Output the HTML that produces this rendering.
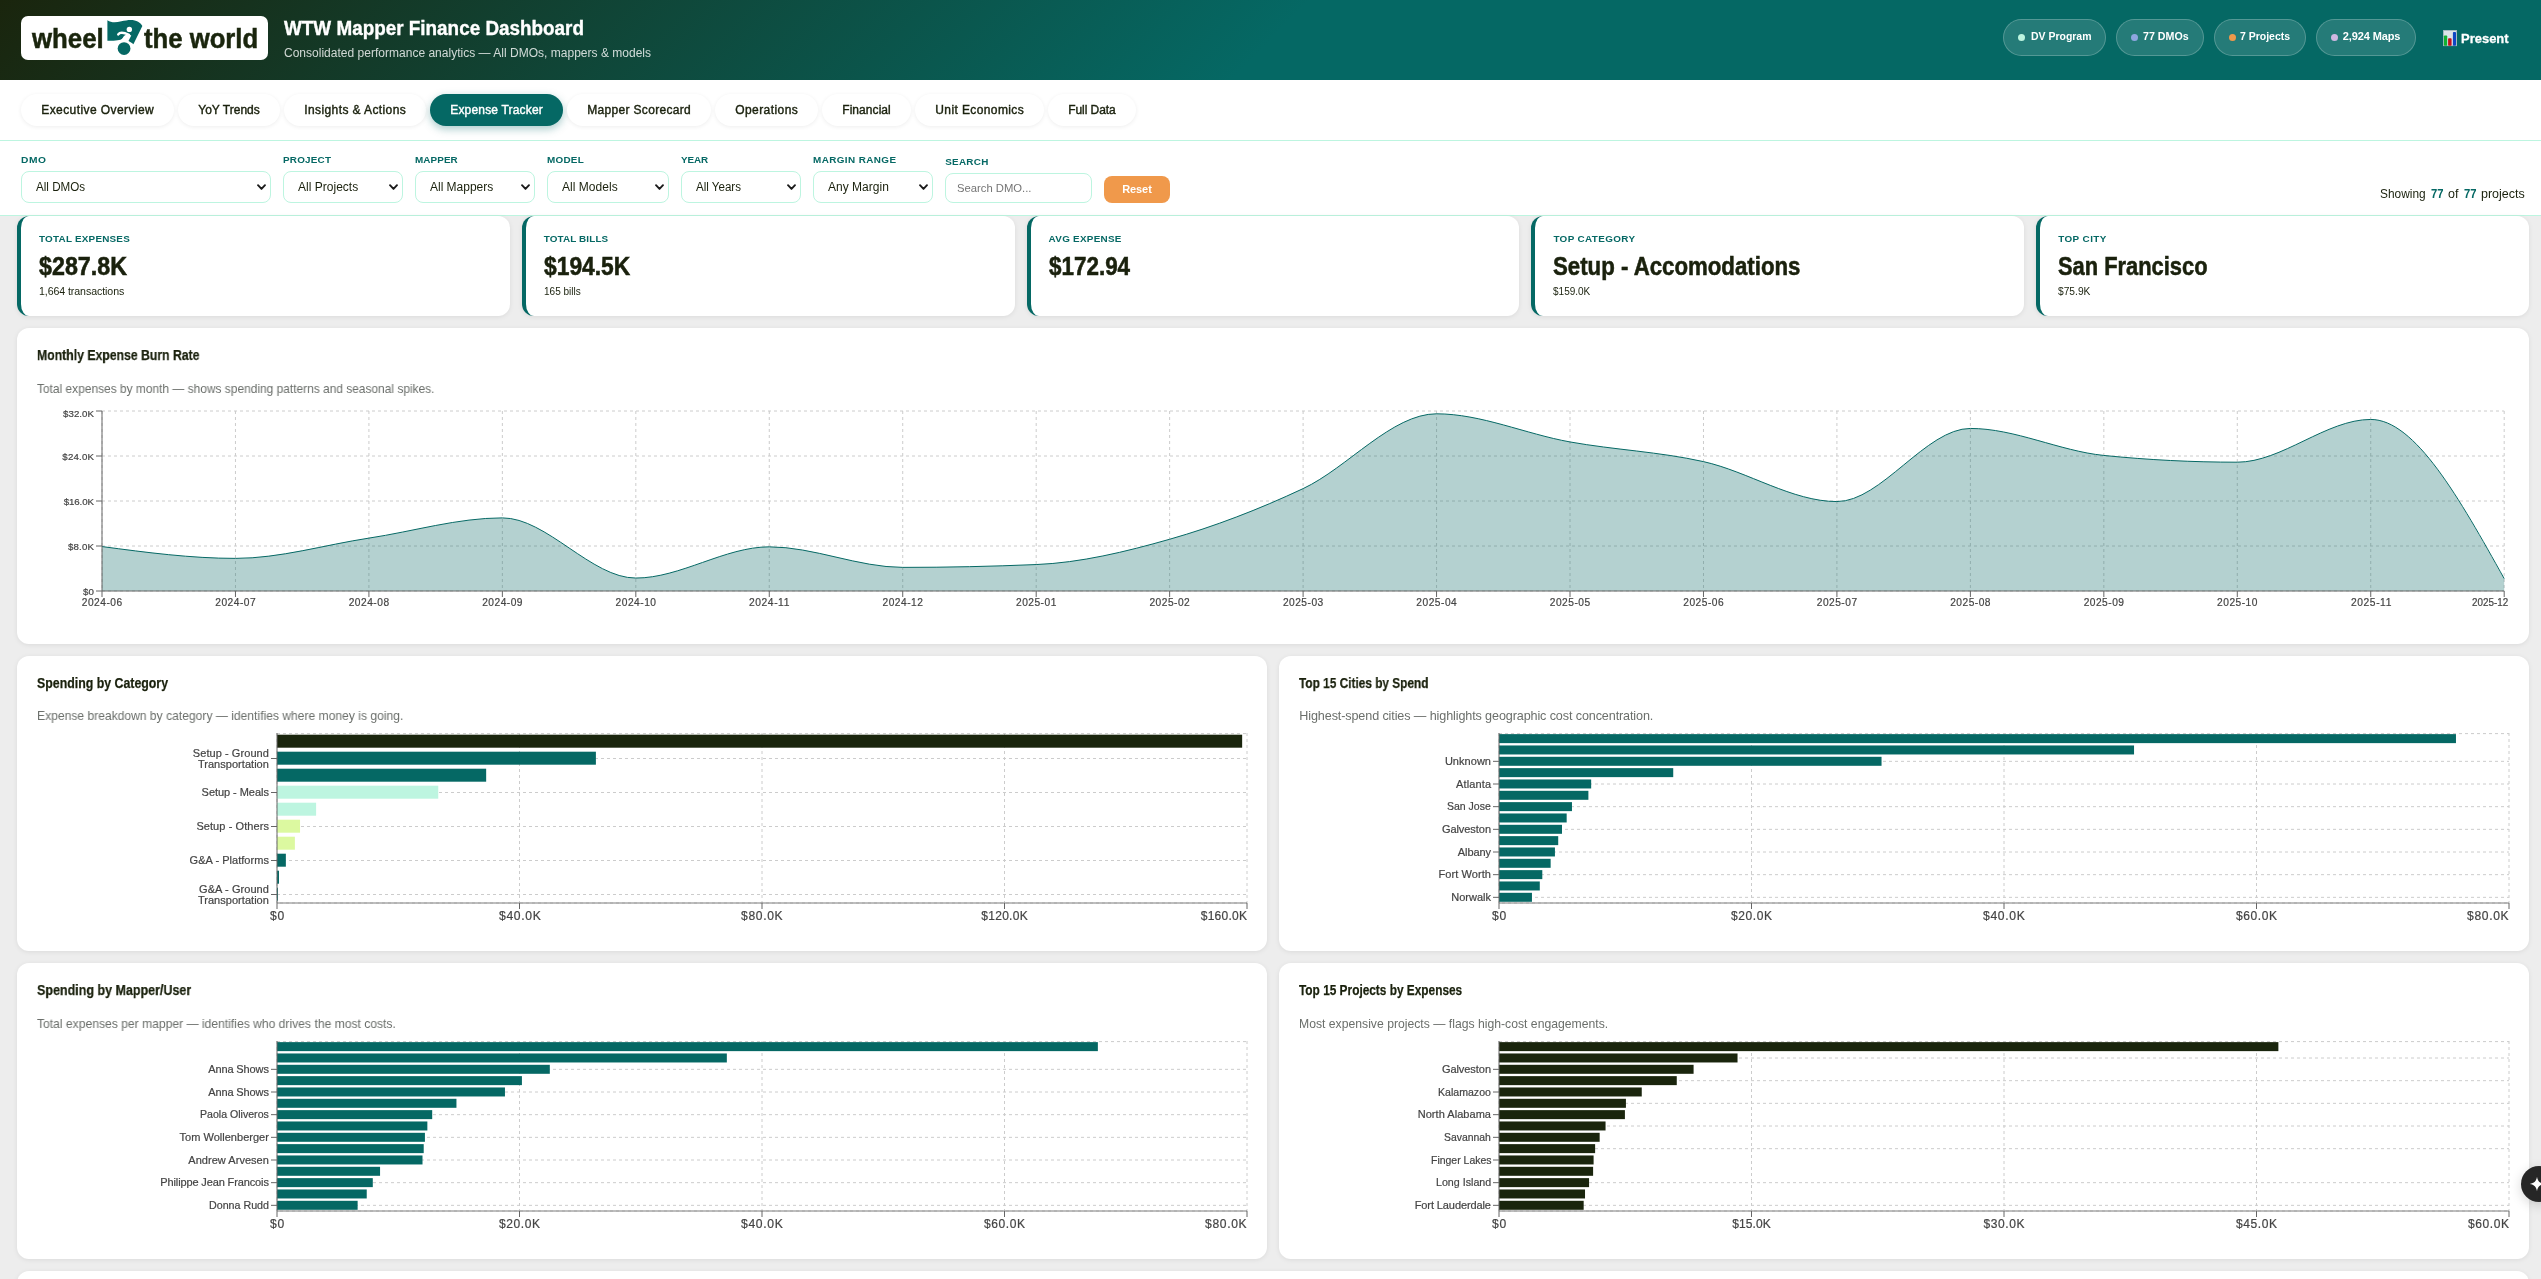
<!DOCTYPE html>
<html lang="en"><head><meta charset="utf-8"><title>WTW Mapper Finance Dashboard</title>
<style>
html,body{margin:0;padding:0;}
body{width:2541px;height:1279px;overflow:hidden;background:#ededed;position:relative;font-family:"Liberation Sans",sans-serif;}
.t{position:absolute;white-space:nowrap;line-height:1;transform-origin:0 50%;}
.b{position:absolute;box-sizing:border-box;}
svg{position:absolute;overflow:visible;}
svg text{font-family:"Liberation Sans",sans-serif;}
#w{position:absolute;left:0;top:0;width:2541px;height:1279px;will-change:transform;}
</style></head><body><div id="w">
<div class="b" style="left:0px;top:0px;width:2541px;height:80px;background:linear-gradient(135deg,#1a250d 0%,#056864 50%,#056864 100%);"></div>
<div class="b" style="left:21px;top:16px;width:247px;height:44px;background:#fff;border-radius:7px;"></div>
<div class="t" style="left:31.50px;top:25.50px;font-size:27px;font-weight:700;color:#1a250d;transform:scaleX(0.9556);-webkit-text-stroke:0.5px #1a250d;">wheel</div>
<div class="t" style="left:143.80px;top:25.50px;font-size:27px;font-weight:700;color:#1a250d;transform:scaleX(0.9517);-webkit-text-stroke:0.5px #1a250d;">the world</div>
<svg style="left:95px;top:12px" width="60" height="52" viewBox="0 0 1476 1279">
<path d="M305,200 C400,262 500,262 650,228 C800,192 950,170 1060,240 C1110,272 1150,310 1165,345 L945,795 C900,750 840,715 760,680 L690,640 C640,690 560,712 305,705 Z" fill="#056864"/>
<circle cx="715" cy="900" r="205" fill="#fff"/>
<path d="M572,552 C612,488 705,498 835,560" fill="none" stroke="#fff" stroke-width="60" stroke-linecap="round"/>
<path d="M800,535 L892,578 L820,722 L610,722 C650,690 685,645 702,598 Z" fill="#fff"/>
<path d="M612,590 C640,560 672,566 700,600" fill="none" stroke="#056864" stroke-width="34" stroke-linecap="butt"/>
<circle cx="845" cy="428" r="66" fill="#fff"/>
<circle cx="715" cy="900" r="157" fill="#056864"/>
</svg>
<div class="t" style="left:284.00px;top:18.90px;font-size:19.5px;font-weight:700;color:#fff;transform:scaleX(0.9682);-webkit-text-stroke:0.35px #fff;">WTW Mapper Finance Dashboard</div>
<div class="t" style="left:284.00px;top:47.00px;font-size:12px;font-weight:400;color:rgba(255,255,255,0.8);letter-spacing:0.014px;">Consolidated performance analytics — All DMOs, mappers &amp; models</div>
<div class="b" style="left:2003px;top:19px;width:103px;height:37px;background:rgba(255,255,255,0.13);border:1px solid rgba(255,255,255,0.22);border-radius:19px;"></div>
<div class="b" style="left:2018px;top:34px;width:7px;height:7px;background:#bdf5e0;border-radius:50%;"></div>
<div class="t" style="left:2030.50px;top:30.80px;font-size:11px;font-weight:700;color:#fff;transform:scaleX(0.9517);">DV Program</div>
<div class="b" style="left:2116px;top:19px;width:88px;height:37px;background:rgba(255,255,255,0.13);border:1px solid rgba(255,255,255,0.22);border-radius:19px;"></div>
<div class="b" style="left:2131.3px;top:34px;width:7px;height:7px;background:#8ea6e0;border-radius:50%;"></div>
<div class="t" style="left:2142.90px;top:30.80px;font-size:11px;font-weight:700;color:#fff;transform:scaleX(0.9687);">77 DMOs</div>
<div class="b" style="left:2214px;top:19px;width:92px;height:37px;background:rgba(255,255,255,0.13);border:1px solid rgba(255,255,255,0.22);border-radius:19px;"></div>
<div class="b" style="left:2229px;top:34px;width:7px;height:7px;background:#f0994b;border-radius:50%;"></div>
<div class="t" style="left:2240.40px;top:30.80px;font-size:11px;font-weight:700;color:#fff;transform:scaleX(0.9528);">7 Projects</div>
<div class="b" style="left:2316px;top:19px;width:100px;height:37px;background:rgba(255,255,255,0.13);border:1px solid rgba(255,255,255,0.22);border-radius:19px;"></div>
<div class="b" style="left:2331px;top:34px;width:7px;height:7px;background:#cfb8e2;border-radius:50%;"></div>
<div class="t" style="left:2342.70px;top:30.80px;font-size:11px;font-weight:700;color:#fff;letter-spacing:-0.100px;">2,924 Maps</div>
<svg style="left:2443px;top:30px" width="14" height="16" viewBox="0 0 14 16">
<rect x="0.3" y="0.3" width="13.4" height="15.5" fill="#dde4ea" stroke="#aeb9c4" stroke-width="0.6"/>
<rect x="0.9" y="5.5" width="3.3" height="10.2" rx="0.8" fill="#13b032"/>
<rect x="5.1" y="8.3" width="3.5" height="7.4" rx="0.8" fill="#c4101a"/>
<rect x="9.9" y="2.1" width="3.1" height="13.6" rx="0.8" fill="#0f45c4"/>
</svg>
<div class="t" style="left:2461.40px;top:32.40px;font-size:13.5px;font-weight:700;color:#fff;transform:scaleX(0.9611);-webkit-text-stroke:0.3px #fff;">Present</div>
<div class="b" style="left:0px;top:80px;width:2541px;height:61px;background:#fff;border-bottom:1px solid #bdf5e0;"></div>
<div class="b" style="left:21px;top:94px;width:153px;height:32px;background:#fff;border-radius:16px;box-shadow:0 1px 4px rgba(0,0,0,0.07);"></div>
<div class="t" style="left:41.25px;top:104.30px;font-size:12px;font-weight:400;color:#1a210d;letter-spacing:0.419px;-webkit-text-stroke:0.4px #1a210d;">Executive Overview</div>
<div class="b" style="left:178px;top:94px;width:102px;height:32px;background:#fff;border-radius:16px;box-shadow:0 1px 4px rgba(0,0,0,0.07);"></div>
<div class="t" style="left:198.25px;top:104.30px;font-size:12px;font-weight:400;color:#1a210d;letter-spacing:0.013px;-webkit-text-stroke:0.4px #1a210d;">YoY Trends</div>
<div class="b" style="left:284px;top:94px;width:142px;height:32px;background:#fff;border-radius:16px;box-shadow:0 1px 4px rgba(0,0,0,0.07);"></div>
<div class="t" style="left:304.25px;top:104.30px;font-size:12px;font-weight:400;color:#1a210d;letter-spacing:0.399px;-webkit-text-stroke:0.4px #1a210d;">Insights &amp; Actions</div>
<div class="b" style="left:430px;top:94px;width:133px;height:32px;background:#056864;border-radius:16px;box-shadow:0 3px 8px rgba(6,102,102,0.35);"></div>
<div class="t" style="left:450.25px;top:104.30px;font-size:12px;font-weight:400;color:#fff;letter-spacing:0.176px;-webkit-text-stroke:0.4px #fff;">Expense Tracker</div>
<div class="b" style="left:567px;top:94px;width:144px;height:32px;background:#fff;border-radius:16px;box-shadow:0 1px 4px rgba(0,0,0,0.07);"></div>
<div class="t" style="left:587.25px;top:104.30px;font-size:12px;font-weight:400;color:#1a210d;letter-spacing:0.319px;-webkit-text-stroke:0.4px #1a210d;">Mapper Scorecard</div>
<div class="b" style="left:715px;top:94px;width:103px;height:32px;background:#fff;border-radius:16px;box-shadow:0 1px 4px rgba(0,0,0,0.07);"></div>
<div class="t" style="left:735.25px;top:104.30px;font-size:12px;font-weight:400;color:#1a210d;letter-spacing:0.422px;-webkit-text-stroke:0.4px #1a210d;">Operations</div>
<div class="b" style="left:822px;top:94px;width:89px;height:32px;background:#fff;border-radius:16px;box-shadow:0 1px 4px rgba(0,0,0,0.07);"></div>
<div class="t" style="left:842.25px;top:104.30px;font-size:12px;font-weight:400;color:#1a210d;letter-spacing:0.060px;-webkit-text-stroke:0.4px #1a210d;">Financial</div>
<div class="b" style="left:915px;top:94px;width:129px;height:32px;background:#fff;border-radius:16px;box-shadow:0 1px 4px rgba(0,0,0,0.07);"></div>
<div class="t" style="left:935.25px;top:104.30px;font-size:12px;font-weight:400;color:#1a210d;letter-spacing:0.395px;-webkit-text-stroke:0.4px #1a210d;">Unit Economics</div>
<div class="b" style="left:1048px;top:94px;width:88px;height:32px;background:#fff;border-radius:16px;box-shadow:0 1px 4px rgba(0,0,0,0.07);"></div>
<div class="t" style="left:1068.25px;top:104.30px;font-size:12px;font-weight:400;color:#1a210d;letter-spacing:-0.065px;-webkit-text-stroke:0.4px #1a210d;">Full Data</div>
<div class="b" style="left:0px;top:141px;width:2541px;height:75px;background:#fff;border-bottom:1px solid #bdf5e0;"></div>
<div class="t" style="left:21.00px;top:155.30px;font-size:9.9px;font-weight:700;color:#056864;letter-spacing:0.544px;transform:scaleX(1.0337);">DMO</div>
<div class="b" style="left:21px;top:171px;width:250px;height:32px;background:#fff;border:1px solid #bdf5e0;border-radius:8px;"></div>
<div class="t" style="left:36.00px;top:181.30px;font-size:12px;font-weight:400;color:#1a210d;transform:scaleX(0.9691);">All DMOs</div>
<svg style="left:257px;top:184.3px" width="9" height="7" viewBox="0 0 9 7"><path d="M1,1.2 L4.5,4.9 L8,1.2" fill="none" stroke="#1b1b1b" stroke-width="1.9" stroke-linecap="round" stroke-linejoin="round"/></svg>
<div class="t" style="left:283.00px;top:155.30px;font-size:9.9px;font-weight:700;color:#056864;letter-spacing:0.223px;">PROJECT</div>
<div class="b" style="left:283px;top:171px;width:120px;height:32px;background:#fff;border:1px solid #bdf5e0;border-radius:8px;"></div>
<div class="t" style="left:298.00px;top:181.30px;font-size:12px;font-weight:400;color:#1a210d;letter-spacing:0.017px;">All Projects</div>
<svg style="left:389px;top:184.3px" width="9" height="7" viewBox="0 0 9 7"><path d="M1,1.2 L4.5,4.9 L8,1.2" fill="none" stroke="#1b1b1b" stroke-width="1.9" stroke-linecap="round" stroke-linejoin="round"/></svg>
<div class="t" style="left:415.00px;top:155.30px;font-size:9.9px;font-weight:700;color:#056864;letter-spacing:0.089px;">MAPPER</div>
<div class="b" style="left:415px;top:171px;width:120px;height:32px;background:#fff;border:1px solid #bdf5e0;border-radius:8px;"></div>
<div class="t" style="left:430.00px;top:181.30px;font-size:12px;font-weight:400;color:#1a210d;letter-spacing:-0.016px;">All Mappers</div>
<svg style="left:521px;top:184.3px" width="9" height="7" viewBox="0 0 9 7"><path d="M1,1.2 L4.5,4.9 L8,1.2" fill="none" stroke="#1b1b1b" stroke-width="1.9" stroke-linecap="round" stroke-linejoin="round"/></svg>
<div class="t" style="left:547.00px;top:155.30px;font-size:9.9px;font-weight:700;color:#056864;letter-spacing:0.263px;">MODEL</div>
<div class="b" style="left:547px;top:171px;width:122px;height:32px;background:#fff;border:1px solid #bdf5e0;border-radius:8px;"></div>
<div class="t" style="left:562.00px;top:181.30px;font-size:12px;font-weight:400;color:#1a210d;letter-spacing:0.038px;">All Models</div>
<svg style="left:655px;top:184.3px" width="9" height="7" viewBox="0 0 9 7"><path d="M1,1.2 L4.5,4.9 L8,1.2" fill="none" stroke="#1b1b1b" stroke-width="1.9" stroke-linecap="round" stroke-linejoin="round"/></svg>
<div class="t" style="left:681.00px;top:155.30px;font-size:9.9px;font-weight:700;color:#056864;letter-spacing:-0.069px;">YEAR</div>
<div class="b" style="left:681px;top:171px;width:120px;height:32px;background:#fff;border:1px solid #bdf5e0;border-radius:8px;"></div>
<div class="t" style="left:696.00px;top:181.30px;font-size:12px;font-weight:400;color:#1a210d;transform:scaleX(0.9636);">All Years</div>
<svg style="left:787px;top:184.3px" width="9" height="7" viewBox="0 0 9 7"><path d="M1,1.2 L4.5,4.9 L8,1.2" fill="none" stroke="#1b1b1b" stroke-width="1.9" stroke-linecap="round" stroke-linejoin="round"/></svg>
<div class="t" style="left:813.00px;top:155.30px;font-size:9.9px;font-weight:700;color:#056864;letter-spacing:0.414px;">MARGIN RANGE</div>
<div class="b" style="left:813px;top:171px;width:120px;height:32px;background:#fff;border:1px solid #bdf5e0;border-radius:8px;"></div>
<div class="t" style="left:828.00px;top:181.30px;font-size:12px;font-weight:400;color:#1a210d;letter-spacing:0.012px;">Any Margin</div>
<svg style="left:919px;top:184.3px" width="9" height="7" viewBox="0 0 9 7"><path d="M1,1.2 L4.5,4.9 L8,1.2" fill="none" stroke="#1b1b1b" stroke-width="1.9" stroke-linecap="round" stroke-linejoin="round"/></svg>
<div class="t" style="left:945.20px;top:157.30px;font-size:9.9px;font-weight:700;color:#056864;letter-spacing:0.279px;">SEARCH</div>
<div class="b" style="left:945px;top:173px;width:146.5px;height:30px;background:#fff;border:1px solid #bdf5e0;border-radius:8px;"></div>
<div class="t" style="left:956.60px;top:182.90px;font-size:11.8px;font-weight:400;color:#757575;transform:scaleX(0.9547);">Search DMO...</div>
<div class="b" style="left:1104px;top:176px;width:66px;height:27px;background:#f0994b;border-radius:8px;"></div>
<div class="t" style="left:1122.15px;top:183.60px;font-size:11px;font-weight:700;color:#fff;letter-spacing:-0.065px;">Reset</div>
<div class="t" style="left:2379.70px;top:188.30px;font-size:12.5px;font-weight:400;color:#1a210d;transform:scaleX(0.9510);">Showing</div>
<div class="t" style="left:2430.50px;top:188.30px;font-size:12.5px;font-weight:700;color:#056864;transform:scaleX(0.8990);">77</div>
<div class="t" style="left:2448.00px;top:188.30px;font-size:12.5px;font-weight:400;color:#1a210d;">of</div>
<div class="t" style="left:2463.50px;top:188.30px;font-size:12.5px;font-weight:700;color:#056864;transform:scaleX(0.8990);">77</div>
<div class="t" style="left:2481.00px;top:188.30px;font-size:12.5px;font-weight:400;color:#1a210d;letter-spacing:-0.010px;">projects</div>
<div class="b" style="left:17.0px;top:216px;width:492.8px;height:100px;background:#fff;border-radius:12px;border-left:4px solid #056864;box-shadow:0 1px 5px rgba(0,0,0,0.08);"></div>
<div class="t" style="left:39.00px;top:234.30px;font-size:9.9px;font-weight:700;color:#056864;letter-spacing:0.229px;">TOTAL EXPENSES</div>
<div class="t" style="left:39.00px;top:253.80px;font-size:25.5px;font-weight:700;color:#1a210d;transform:scaleX(0.9128);-webkit-text-stroke:0.55px #1a210d;">$287.8K</div>
<div class="t" style="left:39.00px;top:286.10px;font-size:10.6px;font-weight:400;color:#1a210d;letter-spacing:-0.078px;">1,664 transactions</div>
<div class="b" style="left:521.8px;top:216px;width:492.8px;height:100px;background:#fff;border-radius:12px;border-left:4px solid #056864;box-shadow:0 1px 5px rgba(0,0,0,0.08);"></div>
<div class="t" style="left:543.80px;top:234.30px;font-size:9.9px;font-weight:700;color:#056864;letter-spacing:0.125px;">TOTAL BILLS</div>
<div class="t" style="left:543.80px;top:253.80px;font-size:25.5px;font-weight:700;color:#1a210d;transform:scaleX(0.8951);-webkit-text-stroke:0.55px #1a210d;">$194.5K</div>
<div class="t" style="left:543.80px;top:286.10px;font-size:10.6px;font-weight:400;color:#1a210d;transform:scaleX(0.9462);">165 bills</div>
<div class="b" style="left:1026.6px;top:216px;width:492.8px;height:100px;background:#fff;border-radius:12px;border-left:4px solid #056864;box-shadow:0 1px 5px rgba(0,0,0,0.08);"></div>
<div class="t" style="left:1048.60px;top:234.30px;font-size:9.9px;font-weight:700;color:#056864;letter-spacing:0.276px;">AVG EXPENSE</div>
<div class="t" style="left:1048.60px;top:253.80px;font-size:25.5px;font-weight:700;color:#1a210d;transform:scaleX(0.8798);-webkit-text-stroke:0.55px #1a210d;">$172.94</div>
<div class="b" style="left:1531.4px;top:216px;width:492.8px;height:100px;background:#fff;border-radius:12px;border-left:4px solid #056864;box-shadow:0 1px 5px rgba(0,0,0,0.08);"></div>
<div class="t" style="left:1553.40px;top:234.30px;font-size:9.9px;font-weight:700;color:#056864;letter-spacing:0.369px;">TOP CATEGORY</div>
<div class="t" style="left:1553.40px;top:253.80px;font-size:25.5px;font-weight:700;color:#1a210d;transform:scaleX(0.8717);-webkit-text-stroke:0.55px #1a210d;">Setup - Accomodations</div>
<div class="t" style="left:1553.40px;top:286.10px;font-size:10.6px;font-weight:400;color:#1a210d;transform:scaleX(0.9445);">$159.0K</div>
<div class="b" style="left:2036.2px;top:216px;width:492.8px;height:100px;background:#fff;border-radius:12px;border-left:4px solid #056864;box-shadow:0 1px 5px rgba(0,0,0,0.08);"></div>
<div class="t" style="left:2058.20px;top:234.30px;font-size:9.9px;font-weight:700;color:#056864;letter-spacing:0.429px;">TOP CITY</div>
<div class="t" style="left:2058.20px;top:253.80px;font-size:25.5px;font-weight:700;color:#1a210d;transform:scaleX(0.8576);-webkit-text-stroke:0.55px #1a210d;">San Francisco</div>
<div class="t" style="left:2058.20px;top:286.10px;font-size:10.6px;font-weight:400;color:#1a210d;transform:scaleX(0.9644);">$75.9K</div>
<div class="b" style="left:17px;top:328.2px;width:2512px;height:316.09999999999997px;background:#fff;border-radius:12px;box-shadow:0 1px 5px rgba(0,0,0,0.08);"></div>
<div class="t" style="left:37.30px;top:347.30px;font-size:15px;font-weight:700;color:#1a210d;transform:scaleX(0.8158);-webkit-text-stroke:0.25px #1a210d;">Monthly Expense Burn Rate</div>
<div class="t" style="left:37.30px;top:382.50px;font-size:12.6px;font-weight:400;color:#6b6f6b;transform:scaleX(0.9479);">Total expenses by month — shows spending patterns and seasonal spikes.</div>
<div class="b" style="left:17px;top:655.5px;width:1250px;height:295.5px;background:#fff;border-radius:12px;box-shadow:0 1px 5px rgba(0,0,0,0.08);"></div>
<div class="t" style="left:37.30px;top:674.60px;font-size:15px;font-weight:700;color:#1a210d;transform:scaleX(0.8229);-webkit-text-stroke:0.25px #1a210d;">Spending by Category</div>
<div class="t" style="left:37.30px;top:709.80px;font-size:12.6px;font-weight:400;color:#6b6f6b;transform:scaleX(0.9601);">Expense breakdown by category — identifies where money is going.</div>
<div class="b" style="left:1279px;top:655.5px;width:1250px;height:295.5px;background:#fff;border-radius:12px;box-shadow:0 1px 5px rgba(0,0,0,0.08);"></div>
<div class="t" style="left:1299.30px;top:674.60px;font-size:15px;font-weight:700;color:#1a210d;transform:scaleX(0.7900);-webkit-text-stroke:0.25px #1a210d;">Top 15 Cities by Spend</div>
<div class="t" style="left:1299.30px;top:709.80px;font-size:12.6px;font-weight:400;color:#6b6f6b;letter-spacing:-0.114px;">Highest-spend cities — highlights geographic cost concentration.</div>
<div class="b" style="left:17px;top:963.3px;width:1250px;height:295.70000000000005px;background:#fff;border-radius:12px;box-shadow:0 1px 5px rgba(0,0,0,0.08);"></div>
<div class="t" style="left:37.30px;top:982.40px;font-size:15px;font-weight:700;color:#1a210d;transform:scaleX(0.8334);-webkit-text-stroke:0.25px #1a210d;">Spending by Mapper/User</div>
<div class="t" style="left:37.30px;top:1017.60px;font-size:12.6px;font-weight:400;color:#6b6f6b;transform:scaleX(0.9618);">Total expenses per mapper — identifies who drives the most costs.</div>
<div class="b" style="left:1279px;top:963.3px;width:1250px;height:295.70000000000005px;background:#fff;border-radius:12px;box-shadow:0 1px 5px rgba(0,0,0,0.08);"></div>
<div class="t" style="left:1299.30px;top:982.40px;font-size:15px;font-weight:700;color:#1a210d;transform:scaleX(0.7904);-webkit-text-stroke:0.25px #1a210d;">Top 15 Projects by Expenses</div>
<div class="t" style="left:1299.30px;top:1017.60px;font-size:12.6px;font-weight:400;color:#6b6f6b;transform:scaleX(0.9685);">Most expensive projects — flags high-cost engagements.</div>
<div class="b" style="left:17px;top:1271px;width:2512px;height:60px;background:#fff;border-radius:12px;box-shadow:0 1px 5px rgba(0,0,0,0.08);"></div>
<div class="t" style="left:81.80px;top:598.10px;font-size:10.2px;font-weight:400;color:#444;letter-spacing:0.494px;-webkit-text-stroke:0.2px #444;">2024-06</div>
<div class="t" style="left:215.26px;top:598.10px;font-size:10.2px;font-weight:400;color:#444;letter-spacing:0.494px;-webkit-text-stroke:0.2px #444;">2024-07</div>
<div class="t" style="left:348.71px;top:598.10px;font-size:10.2px;font-weight:400;color:#444;letter-spacing:0.494px;-webkit-text-stroke:0.2px #444;">2024-08</div>
<div class="t" style="left:482.17px;top:598.10px;font-size:10.2px;font-weight:400;color:#444;letter-spacing:0.494px;-webkit-text-stroke:0.2px #444;">2024-09</div>
<div class="t" style="left:615.62px;top:598.10px;font-size:10.2px;font-weight:400;color:#444;letter-spacing:0.494px;-webkit-text-stroke:0.2px #444;">2024-10</div>
<div class="t" style="left:749.08px;top:598.10px;font-size:10.2px;font-weight:400;color:#444;letter-spacing:0.561px;transform:scaleX(1.0089);-webkit-text-stroke:0.2px #444;">2024-11</div>
<div class="t" style="left:882.53px;top:598.10px;font-size:10.2px;font-weight:400;color:#444;letter-spacing:0.494px;-webkit-text-stroke:0.2px #444;">2024-12</div>
<div class="t" style="left:1015.99px;top:598.10px;font-size:10.2px;font-weight:400;color:#444;letter-spacing:0.494px;-webkit-text-stroke:0.2px #444;">2025-01</div>
<div class="t" style="left:1149.44px;top:598.10px;font-size:10.2px;font-weight:400;color:#444;letter-spacing:0.494px;-webkit-text-stroke:0.2px #444;">2025-02</div>
<div class="t" style="left:1282.90px;top:598.10px;font-size:10.2px;font-weight:400;color:#444;letter-spacing:0.494px;-webkit-text-stroke:0.2px #444;">2025-03</div>
<div class="t" style="left:1416.36px;top:598.10px;font-size:10.2px;font-weight:400;color:#444;letter-spacing:0.494px;-webkit-text-stroke:0.2px #444;">2025-04</div>
<div class="t" style="left:1549.81px;top:598.10px;font-size:10.2px;font-weight:400;color:#444;letter-spacing:0.494px;-webkit-text-stroke:0.2px #444;">2025-05</div>
<div class="t" style="left:1683.27px;top:598.10px;font-size:10.2px;font-weight:400;color:#444;letter-spacing:0.494px;-webkit-text-stroke:0.2px #444;">2025-06</div>
<div class="t" style="left:1816.72px;top:598.10px;font-size:10.2px;font-weight:400;color:#444;letter-spacing:0.494px;-webkit-text-stroke:0.2px #444;">2025-07</div>
<div class="t" style="left:1950.18px;top:598.10px;font-size:10.2px;font-weight:400;color:#444;letter-spacing:0.494px;-webkit-text-stroke:0.2px #444;">2025-08</div>
<div class="t" style="left:2083.63px;top:598.10px;font-size:10.2px;font-weight:400;color:#444;letter-spacing:0.494px;-webkit-text-stroke:0.2px #444;">2025-09</div>
<div class="t" style="left:2217.09px;top:598.10px;font-size:10.2px;font-weight:400;color:#444;letter-spacing:0.494px;-webkit-text-stroke:0.2px #444;">2025-10</div>
<div class="t" style="left:2350.54px;top:598.10px;font-size:10.2px;font-weight:400;color:#444;letter-spacing:0.561px;transform:scaleX(1.0089);-webkit-text-stroke:0.2px #444;">2025-11</div>
<div class="t" style="left:2472.10px;top:598.10px;font-size:10.2px;font-weight:400;color:#444;transform:scaleX(0.9670);-webkit-text-stroke:0.2px #444;">2025-12</div>
<div class="t" style="left:83.00px;top:587.20px;font-size:9.7px;font-weight:400;color:#444;letter-spacing:0.211px;-webkit-text-stroke:0.2px #444;">$0</div>
<div class="t" style="left:68.00px;top:542.20px;font-size:9.7px;font-weight:400;color:#444;letter-spacing:0.163px;-webkit-text-stroke:0.2px #444;">$8.0K</div>
<div class="t" style="left:63.70px;top:497.20px;font-size:9.7px;font-weight:400;color:#444;letter-spacing:-0.089px;-webkit-text-stroke:0.2px #444;">$16.0K</div>
<div class="t" style="left:62.30px;top:452.20px;font-size:9.7px;font-weight:400;color:#444;letter-spacing:0.191px;-webkit-text-stroke:0.2px #444;">$24.0K</div>
<div class="t" style="left:63.00px;top:408.90px;font-size:9.7px;font-weight:400;color:#444;letter-spacing:0.051px;-webkit-text-stroke:0.2px #444;">$32.0K</div>
<div class="t" style="left:269.95px;top:910.00px;font-size:12px;font-weight:400;color:#444;letter-spacing:0.660px;transform:scaleX(1.0066);-webkit-text-stroke:0.2px #444;">$0</div>
<div class="t" style="left:498.60px;top:910.00px;font-size:12px;font-weight:400;color:#444;letter-spacing:0.660px;transform:scaleX(1.0113);-webkit-text-stroke:0.2px #444;">$40.0K</div>
<div class="t" style="left:741.20px;top:910.00px;font-size:12px;font-weight:400;color:#444;letter-spacing:0.660px;transform:scaleX(1.0064);-webkit-text-stroke:0.2px #444;">$80.0K</div>
<div class="t" style="left:981.35px;top:910.00px;font-size:12px;font-weight:400;color:#444;letter-spacing:0.265px;-webkit-text-stroke:0.2px #444;">$120.0K</div>
<div class="t" style="left:1200.70px;top:910.00px;font-size:12px;font-weight:400;color:#444;letter-spacing:0.265px;-webkit-text-stroke:0.2px #444;">$160.0K</div>
<div class="t" style="left:192.80px;top:747.50px;font-size:11px;font-weight:400;color:#444;letter-spacing:0.068px;-webkit-text-stroke:0.2px #444;">Setup - Ground</div>
<div class="t" style="left:197.90px;top:758.80px;font-size:11px;font-weight:400;color:#444;letter-spacing:0.037px;-webkit-text-stroke:0.2px #444;">Transportation</div>
<div class="t" style="left:201.60px;top:787.30px;font-size:11px;font-weight:400;color:#444;letter-spacing:-0.047px;-webkit-text-stroke:0.2px #444;">Setup - Meals</div>
<div class="t" style="left:196.40px;top:821.30px;font-size:11px;font-weight:400;color:#444;letter-spacing:0.074px;-webkit-text-stroke:0.2px #444;">Setup - Others</div>
<div class="t" style="left:189.60px;top:855.30px;font-size:11px;font-weight:400;color:#444;letter-spacing:0.032px;-webkit-text-stroke:0.2px #444;">G&amp;A - Platforms</div>
<div class="t" style="left:199.10px;top:883.50px;font-size:11px;font-weight:400;color:#444;letter-spacing:0.065px;-webkit-text-stroke:0.2px #444;">G&amp;A - Ground</div>
<div class="t" style="left:197.90px;top:894.80px;font-size:11px;font-weight:400;color:#444;letter-spacing:0.037px;-webkit-text-stroke:0.2px #444;">Transportation</div>
<div class="t" style="left:1491.95px;top:910.00px;font-size:12px;font-weight:400;color:#444;letter-spacing:0.660px;transform:scaleX(1.0066);-webkit-text-stroke:0.2px #444;">$0</div>
<div class="t" style="left:1731.00px;top:910.00px;font-size:12px;font-weight:400;color:#444;letter-spacing:0.593px;-webkit-text-stroke:0.2px #444;">$20.0K</div>
<div class="t" style="left:1983.10px;top:910.00px;font-size:12px;font-weight:400;color:#444;letter-spacing:0.660px;transform:scaleX(1.0113);-webkit-text-stroke:0.2px #444;">$40.0K</div>
<div class="t" style="left:2236.05px;top:910.00px;font-size:12px;font-weight:400;color:#444;letter-spacing:0.573px;-webkit-text-stroke:0.2px #444;">$60.0K</div>
<div class="t" style="left:2467.40px;top:910.00px;font-size:12px;font-weight:400;color:#444;letter-spacing:0.660px;transform:scaleX(1.0064);-webkit-text-stroke:0.2px #444;">$80.0K</div>
<div class="t" style="left:1444.90px;top:756.13px;font-size:11px;font-weight:400;color:#444;letter-spacing:0.040px;-webkit-text-stroke:0.2px #444;">Unknown</div>
<div class="t" style="left:1456.00px;top:778.80px;font-size:11px;font-weight:400;color:#444;letter-spacing:0.126px;-webkit-text-stroke:0.2px #444;">Atlanta</div>
<div class="t" style="left:1447.20px;top:801.47px;font-size:11px;font-weight:400;color:#444;transform:scaleX(0.9550);-webkit-text-stroke:0.2px #444;">San Jose</div>
<div class="t" style="left:1441.90px;top:824.13px;font-size:11px;font-weight:400;color:#444;letter-spacing:-0.053px;-webkit-text-stroke:0.2px #444;">Galveston</div>
<div class="t" style="left:1457.80px;top:846.80px;font-size:11px;font-weight:400;color:#444;letter-spacing:-0.087px;-webkit-text-stroke:0.2px #444;">Albany</div>
<div class="t" style="left:1438.40px;top:869.47px;font-size:11px;font-weight:400;color:#444;letter-spacing:0.094px;-webkit-text-stroke:0.2px #444;">Fort Worth</div>
<div class="t" style="left:1451.20px;top:892.13px;font-size:11px;font-weight:400;color:#444;letter-spacing:0.012px;-webkit-text-stroke:0.2px #444;">Norwalk</div>
<div class="t" style="left:269.95px;top:1218.00px;font-size:12px;font-weight:400;color:#444;letter-spacing:0.660px;transform:scaleX(1.0066);-webkit-text-stroke:0.2px #444;">$0</div>
<div class="t" style="left:499.00px;top:1218.00px;font-size:12px;font-weight:400;color:#444;letter-spacing:0.593px;-webkit-text-stroke:0.2px #444;">$20.0K</div>
<div class="t" style="left:741.10px;top:1218.00px;font-size:12px;font-weight:400;color:#444;letter-spacing:0.660px;transform:scaleX(1.0113);-webkit-text-stroke:0.2px #444;">$40.0K</div>
<div class="t" style="left:984.05px;top:1218.00px;font-size:12px;font-weight:400;color:#444;letter-spacing:0.573px;-webkit-text-stroke:0.2px #444;">$60.0K</div>
<div class="t" style="left:1205.40px;top:1218.00px;font-size:12px;font-weight:400;color:#444;letter-spacing:0.660px;transform:scaleX(1.0064);-webkit-text-stroke:0.2px #444;">$80.0K</div>
<div class="t" style="left:208.20px;top:1064.13px;font-size:11px;font-weight:400;color:#444;letter-spacing:-0.118px;-webkit-text-stroke:0.2px #444;">Anna Shows</div>
<div class="t" style="left:208.20px;top:1086.80px;font-size:11px;font-weight:400;color:#444;letter-spacing:-0.118px;-webkit-text-stroke:0.2px #444;">Anna Shows</div>
<div class="t" style="left:200.10px;top:1109.47px;font-size:11px;font-weight:400;color:#444;transform:scaleX(0.9618);-webkit-text-stroke:0.2px #444;">Paola Oliveros</div>
<div class="t" style="left:179.50px;top:1132.13px;font-size:11px;font-weight:400;color:#444;letter-spacing:0.023px;-webkit-text-stroke:0.2px #444;">Tom Wollenberger</div>
<div class="t" style="left:188.30px;top:1154.80px;font-size:11px;font-weight:400;color:#444;letter-spacing:0.038px;-webkit-text-stroke:0.2px #444;">Andrew Arvesen</div>
<div class="t" style="left:160.30px;top:1177.47px;font-size:11px;font-weight:400;color:#444;letter-spacing:-0.128px;-webkit-text-stroke:0.2px #444;">Philippe Jean Francois</div>
<div class="t" style="left:208.90px;top:1200.13px;font-size:11px;font-weight:400;color:#444;transform:scaleX(0.9714);-webkit-text-stroke:0.2px #444;">Donna Rudd</div>
<div class="t" style="left:1491.95px;top:1218.00px;font-size:12px;font-weight:400;color:#444;letter-spacing:0.660px;transform:scaleX(1.0066);-webkit-text-stroke:0.2px #444;">$0</div>
<div class="t" style="left:1732.35px;top:1218.00px;font-size:12px;font-weight:400;color:#444;letter-spacing:0.053px;-webkit-text-stroke:0.2px #444;">$15.0K</div>
<div class="t" style="left:1983.50px;top:1218.00px;font-size:12px;font-weight:400;color:#444;letter-spacing:0.593px;-webkit-text-stroke:0.2px #444;">$30.0K</div>
<div class="t" style="left:2236.00px;top:1218.00px;font-size:12px;font-weight:400;color:#444;letter-spacing:0.593px;-webkit-text-stroke:0.2px #444;">$45.0K</div>
<div class="t" style="left:2468.10px;top:1218.00px;font-size:12px;font-weight:400;color:#444;letter-spacing:0.573px;-webkit-text-stroke:0.2px #444;">$60.0K</div>
<div class="t" style="left:1441.90px;top:1064.13px;font-size:11px;font-weight:400;color:#444;letter-spacing:-0.053px;-webkit-text-stroke:0.2px #444;">Galveston</div>
<div class="t" style="left:1438.10px;top:1086.80px;font-size:11px;font-weight:400;color:#444;transform:scaleX(0.9612);-webkit-text-stroke:0.2px #444;">Kalamazoo</div>
<div class="t" style="left:1417.70px;top:1109.47px;font-size:11px;font-weight:400;color:#444;letter-spacing:0.045px;-webkit-text-stroke:0.2px #444;">North Alabama</div>
<div class="t" style="left:1444.10px;top:1132.13px;font-size:11px;font-weight:400;color:#444;transform:scaleX(0.9466);-webkit-text-stroke:0.2px #444;">Savannah</div>
<div class="t" style="left:1430.50px;top:1154.80px;font-size:11px;font-weight:400;color:#444;transform:scaleX(0.9514);-webkit-text-stroke:0.2px #444;">Finger Lakes</div>
<div class="t" style="left:1435.80px;top:1177.47px;font-size:11px;font-weight:400;color:#444;transform:scaleX(0.9705);-webkit-text-stroke:0.2px #444;">Long Island</div>
<div class="t" style="left:1414.70px;top:1200.13px;font-size:11px;font-weight:400;color:#444;letter-spacing:-0.097px;-webkit-text-stroke:0.2px #444;">Fort Lauderdale</div>
<svg style="left:0;top:0" width="2541" height="1279" viewBox="0 0 2541 1279" shape-rendering="auto"><line x1="102.00" y1="411.0" x2="102.00" y2="591.0" stroke="#ccc" stroke-dasharray="3 3"/><line x1="235.46" y1="411.0" x2="235.46" y2="591.0" stroke="#ccc" stroke-dasharray="3 3"/><line x1="368.91" y1="411.0" x2="368.91" y2="591.0" stroke="#ccc" stroke-dasharray="3 3"/><line x1="502.37" y1="411.0" x2="502.37" y2="591.0" stroke="#ccc" stroke-dasharray="3 3"/><line x1="635.82" y1="411.0" x2="635.82" y2="591.0" stroke="#ccc" stroke-dasharray="3 3"/><line x1="769.28" y1="411.0" x2="769.28" y2="591.0" stroke="#ccc" stroke-dasharray="3 3"/><line x1="902.73" y1="411.0" x2="902.73" y2="591.0" stroke="#ccc" stroke-dasharray="3 3"/><line x1="1036.19" y1="411.0" x2="1036.19" y2="591.0" stroke="#ccc" stroke-dasharray="3 3"/><line x1="1169.64" y1="411.0" x2="1169.64" y2="591.0" stroke="#ccc" stroke-dasharray="3 3"/><line x1="1303.10" y1="411.0" x2="1303.10" y2="591.0" stroke="#ccc" stroke-dasharray="3 3"/><line x1="1436.56" y1="411.0" x2="1436.56" y2="591.0" stroke="#ccc" stroke-dasharray="3 3"/><line x1="1570.01" y1="411.0" x2="1570.01" y2="591.0" stroke="#ccc" stroke-dasharray="3 3"/><line x1="1703.47" y1="411.0" x2="1703.47" y2="591.0" stroke="#ccc" stroke-dasharray="3 3"/><line x1="1836.92" y1="411.0" x2="1836.92" y2="591.0" stroke="#ccc" stroke-dasharray="3 3"/><line x1="1970.38" y1="411.0" x2="1970.38" y2="591.0" stroke="#ccc" stroke-dasharray="3 3"/><line x1="2103.83" y1="411.0" x2="2103.83" y2="591.0" stroke="#ccc" stroke-dasharray="3 3"/><line x1="2237.29" y1="411.0" x2="2237.29" y2="591.0" stroke="#ccc" stroke-dasharray="3 3"/><line x1="2370.74" y1="411.0" x2="2370.74" y2="591.0" stroke="#ccc" stroke-dasharray="3 3"/><line x1="2504.20" y1="411.0" x2="2504.20" y2="591.0" stroke="#ccc" stroke-dasharray="3 3"/><line x1="102.0" y1="591.00" x2="2504.2" y2="591.00" stroke="#ccc" stroke-dasharray="3 3"/><line x1="102.0" y1="546.00" x2="2504.2" y2="546.00" stroke="#ccc" stroke-dasharray="3 3"/><line x1="102.0" y1="501.00" x2="2504.2" y2="501.00" stroke="#ccc" stroke-dasharray="3 3"/><line x1="102.0" y1="456.00" x2="2504.2" y2="456.00" stroke="#ccc" stroke-dasharray="3 3"/><line x1="102.0" y1="411.00" x2="2504.2" y2="411.00" stroke="#ccc" stroke-dasharray="3 3"/><path d="M102.00,546.56C146.49,552.47,190.97,558.38,235.46,558.38C279.94,558.38,324.43,544.88,368.91,538.12C413.40,531.38,457.88,517.88,502.37,517.88C546.85,517.88,591.34,578.06,635.82,578.06C680.31,578.06,724.79,546.84,769.28,546.84C813.76,546.84,858.25,567.38,902.73,567.38C947.22,567.38,991.70,566.44,1036.19,564.56C1080.67,562.69,1125.16,551.91,1169.64,539.25C1214.13,526.59,1258.61,509.53,1303.10,488.62C1347.59,467.72,1392.07,413.81,1436.56,413.81C1481.04,413.81,1525.53,433.97,1570.01,441.94C1614.50,449.91,1658.98,451.69,1703.47,461.62C1747.95,471.56,1792.44,501.56,1836.92,501.56C1881.41,501.56,1925.89,428.44,1970.38,428.44C2014.86,428.44,2059.35,450.94,2103.83,455.44C2148.32,459.94,2192.80,462.19,2237.29,462.19C2281.77,462.19,2326.26,419.44,2370.74,419.44C2415.23,419.44,2459.71,499.03,2504.20,578.62L2504.20,591.0L102.0,591.0Z" fill="#056864" fill-opacity="0.3"/><path d="M102.00,546.56C146.49,552.47,190.97,558.38,235.46,558.38C279.94,558.38,324.43,544.88,368.91,538.12C413.40,531.38,457.88,517.88,502.37,517.88C546.85,517.88,591.34,578.06,635.82,578.06C680.31,578.06,724.79,546.84,769.28,546.84C813.76,546.84,858.25,567.38,902.73,567.38C947.22,567.38,991.70,566.44,1036.19,564.56C1080.67,562.69,1125.16,551.91,1169.64,539.25C1214.13,526.59,1258.61,509.53,1303.10,488.62C1347.59,467.72,1392.07,413.81,1436.56,413.81C1481.04,413.81,1525.53,433.97,1570.01,441.94C1614.50,449.91,1658.98,451.69,1703.47,461.62C1747.95,471.56,1792.44,501.56,1836.92,501.56C1881.41,501.56,1925.89,428.44,1970.38,428.44C2014.86,428.44,2059.35,450.94,2103.83,455.44C2148.32,459.94,2192.80,462.19,2237.29,462.19C2281.77,462.19,2326.26,419.44,2370.74,419.44C2415.23,419.44,2459.71,499.03,2504.20,578.62" fill="none" stroke="#056864" stroke-width="1"/><line x1="102.0" y1="591.0" x2="2504.2" y2="591.0" stroke="#666"/><line x1="102.0" y1="411.0" x2="102.0" y2="591.0" stroke="#666"/><line x1="102.00" y1="591.0" x2="102.00" y2="597.0" stroke="#666"/><line x1="235.46" y1="591.0" x2="235.46" y2="597.0" stroke="#666"/><line x1="368.91" y1="591.0" x2="368.91" y2="597.0" stroke="#666"/><line x1="502.37" y1="591.0" x2="502.37" y2="597.0" stroke="#666"/><line x1="635.82" y1="591.0" x2="635.82" y2="597.0" stroke="#666"/><line x1="769.28" y1="591.0" x2="769.28" y2="597.0" stroke="#666"/><line x1="902.73" y1="591.0" x2="902.73" y2="597.0" stroke="#666"/><line x1="1036.19" y1="591.0" x2="1036.19" y2="597.0" stroke="#666"/><line x1="1169.64" y1="591.0" x2="1169.64" y2="597.0" stroke="#666"/><line x1="1303.10" y1="591.0" x2="1303.10" y2="597.0" stroke="#666"/><line x1="1436.56" y1="591.0" x2="1436.56" y2="597.0" stroke="#666"/><line x1="1570.01" y1="591.0" x2="1570.01" y2="597.0" stroke="#666"/><line x1="1703.47" y1="591.0" x2="1703.47" y2="597.0" stroke="#666"/><line x1="1836.92" y1="591.0" x2="1836.92" y2="597.0" stroke="#666"/><line x1="1970.38" y1="591.0" x2="1970.38" y2="597.0" stroke="#666"/><line x1="2103.83" y1="591.0" x2="2103.83" y2="597.0" stroke="#666"/><line x1="2237.29" y1="591.0" x2="2237.29" y2="597.0" stroke="#666"/><line x1="2370.74" y1="591.0" x2="2370.74" y2="597.0" stroke="#666"/><line x1="2504.20" y1="591.0" x2="2504.20" y2="597.0" stroke="#666"/><line x1="96.0" y1="591.00" x2="102.0" y2="591.00" stroke="#666"/><line x1="96.0" y1="546.00" x2="102.0" y2="546.00" stroke="#666"/><line x1="96.0" y1="501.00" x2="102.0" y2="501.00" stroke="#666"/><line x1="96.0" y1="456.00" x2="102.0" y2="456.00" stroke="#666"/><line x1="96.0" y1="411.00" x2="102.0" y2="411.00" stroke="#666"/><line x1="277.0" y1="733.6" x2="1247.0" y2="733.6" stroke="#ccc" stroke-dasharray="3 3"/><line x1="277.0" y1="758.50" x2="1247.0" y2="758.50" stroke="#ccc" stroke-dasharray="3 3"/><line x1="277.0" y1="792.50" x2="1247.0" y2="792.50" stroke="#ccc" stroke-dasharray="3 3"/><line x1="277.0" y1="826.50" x2="1247.0" y2="826.50" stroke="#ccc" stroke-dasharray="3 3"/><line x1="277.0" y1="860.50" x2="1247.0" y2="860.50" stroke="#ccc" stroke-dasharray="3 3"/><line x1="277.0" y1="894.50" x2="1247.0" y2="894.50" stroke="#ccc" stroke-dasharray="3 3"/><line x1="277.00" y1="733.0" x2="277.00" y2="903.0" stroke="#ccc" stroke-dasharray="3 3"/><line x1="519.50" y1="733.0" x2="519.50" y2="903.0" stroke="#ccc" stroke-dasharray="3 3"/><line x1="762.00" y1="733.0" x2="762.00" y2="903.0" stroke="#ccc" stroke-dasharray="3 3"/><line x1="1004.50" y1="733.0" x2="1004.50" y2="903.0" stroke="#ccc" stroke-dasharray="3 3"/><line x1="1247.00" y1="733.0" x2="1247.00" y2="903.0" stroke="#ccc" stroke-dasharray="3 3"/><rect x="277.0" y="734.70" width="965.15" height="13" fill="#1a250d"/><rect x="277.0" y="751.70" width="318.89" height="13" fill="#056864"/><rect x="277.0" y="768.70" width="209.16" height="13" fill="#056864"/><rect x="277.0" y="785.70" width="161.26" height="13" fill="#bdf5e0"/><rect x="277.0" y="802.70" width="39.10" height="13" fill="#bdf5e0"/><rect x="277.0" y="819.70" width="23.04" height="13" fill="#dcf9a0"/><rect x="277.0" y="836.70" width="17.88" height="13" fill="#dcf9a0"/><rect x="277.0" y="853.70" width="8.85" height="13" fill="#056864"/><rect x="277.0" y="870.70" width="2.00" height="13" fill="#056864"/><rect x="277.0" y="887.70" width="0.91" height="13" fill="#056864"/><line x1="277.0" y1="903.0" x2="1247.0" y2="903.0" stroke="#666"/><line x1="277.0" y1="903.0" x2="1247.0" y2="903.0" stroke="#ddd" stroke-opacity="0.55" stroke-dasharray="3 3"/><line x1="277.0" y1="733.0" x2="277.0" y2="903.0" stroke="#666"/><line x1="277.00" y1="903.0" x2="277.00" y2="909.0" stroke="#666"/><line x1="519.50" y1="903.0" x2="519.50" y2="909.0" stroke="#666"/><line x1="762.00" y1="903.0" x2="762.00" y2="909.0" stroke="#666"/><line x1="1004.50" y1="903.0" x2="1004.50" y2="909.0" stroke="#666"/><line x1="1247.00" y1="903.0" x2="1247.00" y2="909.0" stroke="#666"/><line x1="271.0" y1="758.50" x2="277.0" y2="758.50" stroke="#666"/><line x1="271.0" y1="792.50" x2="277.0" y2="792.50" stroke="#666"/><line x1="271.0" y1="826.50" x2="277.0" y2="826.50" stroke="#666"/><line x1="271.0" y1="860.50" x2="277.0" y2="860.50" stroke="#666"/><line x1="271.0" y1="894.50" x2="277.0" y2="894.50" stroke="#666"/><line x1="1499.0" y1="733.6" x2="2509.0" y2="733.6" stroke="#ccc" stroke-dasharray="3 3"/><line x1="1499.0" y1="761.33" x2="2509.0" y2="761.33" stroke="#ccc" stroke-dasharray="3 3"/><line x1="1499.0" y1="784.00" x2="2509.0" y2="784.00" stroke="#ccc" stroke-dasharray="3 3"/><line x1="1499.0" y1="806.67" x2="2509.0" y2="806.67" stroke="#ccc" stroke-dasharray="3 3"/><line x1="1499.0" y1="829.33" x2="2509.0" y2="829.33" stroke="#ccc" stroke-dasharray="3 3"/><line x1="1499.0" y1="852.00" x2="2509.0" y2="852.00" stroke="#ccc" stroke-dasharray="3 3"/><line x1="1499.0" y1="874.67" x2="2509.0" y2="874.67" stroke="#ccc" stroke-dasharray="3 3"/><line x1="1499.0" y1="897.33" x2="2509.0" y2="897.33" stroke="#ccc" stroke-dasharray="3 3"/><line x1="1499.00" y1="733.0" x2="1499.00" y2="903.0" stroke="#ccc" stroke-dasharray="3 3"/><line x1="1751.50" y1="733.0" x2="1751.50" y2="903.0" stroke="#ccc" stroke-dasharray="3 3"/><line x1="2004.00" y1="733.0" x2="2004.00" y2="903.0" stroke="#ccc" stroke-dasharray="3 3"/><line x1="2256.50" y1="733.0" x2="2256.50" y2="903.0" stroke="#ccc" stroke-dasharray="3 3"/><line x1="2509.00" y1="733.0" x2="2509.00" y2="903.0" stroke="#ccc" stroke-dasharray="3 3"/><rect x="1499.0" y="734.13" width="956.97" height="9" fill="#056864"/><rect x="1499.0" y="745.47" width="635.04" height="9" fill="#056864"/><rect x="1499.0" y="756.80" width="382.54" height="9" fill="#056864"/><rect x="1499.0" y="768.13" width="174.23" height="9" fill="#056864"/><rect x="1499.0" y="779.47" width="92.16" height="9" fill="#056864"/><rect x="1499.0" y="790.80" width="89.39" height="9" fill="#056864"/><rect x="1499.0" y="802.13" width="72.97" height="9" fill="#056864"/><rect x="1499.0" y="813.47" width="67.67" height="9" fill="#056864"/><rect x="1499.0" y="824.80" width="63.00" height="9" fill="#056864"/><rect x="1499.0" y="836.13" width="59.21" height="9" fill="#056864"/><rect x="1499.0" y="847.47" width="55.93" height="9" fill="#056864"/><rect x="1499.0" y="858.80" width="51.64" height="9" fill="#056864"/><rect x="1499.0" y="870.13" width="43.30" height="9" fill="#056864"/><rect x="1499.0" y="881.47" width="40.78" height="9" fill="#056864"/><rect x="1499.0" y="892.80" width="32.95" height="9" fill="#056864"/><line x1="1499.0" y1="903.0" x2="2509.0" y2="903.0" stroke="#666"/><line x1="1499.0" y1="903.0" x2="2509.0" y2="903.0" stroke="#ddd" stroke-opacity="0.55" stroke-dasharray="3 3"/><line x1="1499.0" y1="733.0" x2="1499.0" y2="903.0" stroke="#666"/><line x1="1499.00" y1="903.0" x2="1499.00" y2="909.0" stroke="#666"/><line x1="1751.50" y1="903.0" x2="1751.50" y2="909.0" stroke="#666"/><line x1="2004.00" y1="903.0" x2="2004.00" y2="909.0" stroke="#666"/><line x1="2256.50" y1="903.0" x2="2256.50" y2="909.0" stroke="#666"/><line x1="2509.00" y1="903.0" x2="2509.00" y2="909.0" stroke="#666"/><line x1="1493.0" y1="761.33" x2="1499.0" y2="761.33" stroke="#666"/><line x1="1493.0" y1="784.00" x2="1499.0" y2="784.00" stroke="#666"/><line x1="1493.0" y1="806.67" x2="1499.0" y2="806.67" stroke="#666"/><line x1="1493.0" y1="829.33" x2="1499.0" y2="829.33" stroke="#666"/><line x1="1493.0" y1="852.00" x2="1499.0" y2="852.00" stroke="#666"/><line x1="1493.0" y1="874.67" x2="1499.0" y2="874.67" stroke="#666"/><line x1="1493.0" y1="897.33" x2="1499.0" y2="897.33" stroke="#666"/><line x1="277.0" y1="1041.6" x2="1247.0" y2="1041.6" stroke="#ccc" stroke-dasharray="3 3"/><line x1="277.0" y1="1069.33" x2="1247.0" y2="1069.33" stroke="#ccc" stroke-dasharray="3 3"/><line x1="277.0" y1="1092.00" x2="1247.0" y2="1092.00" stroke="#ccc" stroke-dasharray="3 3"/><line x1="277.0" y1="1114.67" x2="1247.0" y2="1114.67" stroke="#ccc" stroke-dasharray="3 3"/><line x1="277.0" y1="1137.33" x2="1247.0" y2="1137.33" stroke="#ccc" stroke-dasharray="3 3"/><line x1="277.0" y1="1160.00" x2="1247.0" y2="1160.00" stroke="#ccc" stroke-dasharray="3 3"/><line x1="277.0" y1="1182.67" x2="1247.0" y2="1182.67" stroke="#ccc" stroke-dasharray="3 3"/><line x1="277.0" y1="1205.33" x2="1247.0" y2="1205.33" stroke="#ccc" stroke-dasharray="3 3"/><line x1="277.00" y1="1041.0" x2="277.00" y2="1211.0" stroke="#ccc" stroke-dasharray="3 3"/><line x1="519.50" y1="1041.0" x2="519.50" y2="1211.0" stroke="#ccc" stroke-dasharray="3 3"/><line x1="762.00" y1="1041.0" x2="762.00" y2="1211.0" stroke="#ccc" stroke-dasharray="3 3"/><line x1="1004.50" y1="1041.0" x2="1004.50" y2="1211.0" stroke="#ccc" stroke-dasharray="3 3"/><line x1="1247.00" y1="1041.0" x2="1247.00" y2="1211.0" stroke="#ccc" stroke-dasharray="3 3"/><rect x="277.0" y="1042.13" width="820.86" height="9" fill="#056864"/><rect x="277.0" y="1053.47" width="449.84" height="9" fill="#056864"/><rect x="277.0" y="1064.80" width="272.81" height="9" fill="#056864"/><rect x="277.0" y="1076.13" width="244.92" height="9" fill="#056864"/><rect x="277.0" y="1087.47" width="227.95" height="9" fill="#056864"/><rect x="277.0" y="1098.80" width="179.45" height="9" fill="#056864"/><rect x="277.0" y="1110.13" width="155.20" height="9" fill="#056864"/><rect x="277.0" y="1121.47" width="150.35" height="9" fill="#056864"/><rect x="277.0" y="1132.80" width="147.92" height="9" fill="#056864"/><rect x="277.0" y="1144.13" width="146.71" height="9" fill="#056864"/><rect x="277.0" y="1155.47" width="145.50" height="9" fill="#056864"/><rect x="277.0" y="1166.80" width="103.06" height="9" fill="#056864"/><rect x="277.0" y="1178.13" width="95.79" height="9" fill="#056864"/><rect x="277.0" y="1189.47" width="89.73" height="9" fill="#056864"/><rect x="277.0" y="1200.80" width="80.63" height="9" fill="#056864"/><line x1="277.0" y1="1211.0" x2="1247.0" y2="1211.0" stroke="#666"/><line x1="277.0" y1="1211.0" x2="1247.0" y2="1211.0" stroke="#ddd" stroke-opacity="0.55" stroke-dasharray="3 3"/><line x1="277.0" y1="1041.0" x2="277.0" y2="1211.0" stroke="#666"/><line x1="277.00" y1="1211.0" x2="277.00" y2="1217.0" stroke="#666"/><line x1="519.50" y1="1211.0" x2="519.50" y2="1217.0" stroke="#666"/><line x1="762.00" y1="1211.0" x2="762.00" y2="1217.0" stroke="#666"/><line x1="1004.50" y1="1211.0" x2="1004.50" y2="1217.0" stroke="#666"/><line x1="1247.00" y1="1211.0" x2="1247.00" y2="1217.0" stroke="#666"/><line x1="271.0" y1="1069.33" x2="277.0" y2="1069.33" stroke="#666"/><line x1="271.0" y1="1092.00" x2="277.0" y2="1092.00" stroke="#666"/><line x1="271.0" y1="1114.67" x2="277.0" y2="1114.67" stroke="#666"/><line x1="271.0" y1="1137.33" x2="277.0" y2="1137.33" stroke="#666"/><line x1="271.0" y1="1160.00" x2="277.0" y2="1160.00" stroke="#666"/><line x1="271.0" y1="1182.67" x2="277.0" y2="1182.67" stroke="#666"/><line x1="271.0" y1="1205.33" x2="277.0" y2="1205.33" stroke="#666"/><line x1="1499.0" y1="1041.6" x2="2509.0" y2="1041.6" stroke="#ccc" stroke-dasharray="3 3"/><line x1="1499.0" y1="1058.00" x2="2509.0" y2="1058.00" stroke="#ccc" stroke-dasharray="3 3"/><line x1="1499.0" y1="1080.67" x2="2509.0" y2="1080.67" stroke="#ccc" stroke-dasharray="3 3"/><line x1="1499.0" y1="1103.33" x2="2509.0" y2="1103.33" stroke="#ccc" stroke-dasharray="3 3"/><line x1="1499.0" y1="1126.00" x2="2509.0" y2="1126.00" stroke="#ccc" stroke-dasharray="3 3"/><line x1="1499.0" y1="1148.67" x2="2509.0" y2="1148.67" stroke="#ccc" stroke-dasharray="3 3"/><line x1="1499.0" y1="1182.67" x2="2509.0" y2="1182.67" stroke="#ccc" stroke-dasharray="3 3"/><line x1="1499.0" y1="1205.33" x2="2509.0" y2="1205.33" stroke="#ccc" stroke-dasharray="3 3"/><line x1="1499.00" y1="1041.0" x2="1499.00" y2="1211.0" stroke="#ccc" stroke-dasharray="3 3"/><line x1="1751.50" y1="1041.0" x2="1751.50" y2="1211.0" stroke="#ccc" stroke-dasharray="3 3"/><line x1="2004.00" y1="1041.0" x2="2004.00" y2="1211.0" stroke="#ccc" stroke-dasharray="3 3"/><line x1="2256.50" y1="1041.0" x2="2256.50" y2="1211.0" stroke="#ccc" stroke-dasharray="3 3"/><line x1="2509.00" y1="1041.0" x2="2509.00" y2="1211.0" stroke="#ccc" stroke-dasharray="3 3"/><rect x="1499.0" y="1042.13" width="779.38" height="9" fill="#1a250d"/><rect x="1499.0" y="1053.47" width="238.53" height="9" fill="#1a250d"/><rect x="1499.0" y="1064.80" width="194.59" height="9" fill="#1a250d"/><rect x="1499.0" y="1076.13" width="177.76" height="9" fill="#1a250d"/><rect x="1499.0" y="1087.47" width="142.75" height="9" fill="#1a250d"/><rect x="1499.0" y="1098.80" width="126.92" height="9" fill="#1a250d"/><rect x="1499.0" y="1110.13" width="125.91" height="9" fill="#1a250d"/><rect x="1499.0" y="1121.47" width="106.55" height="9" fill="#1a250d"/><rect x="1499.0" y="1132.80" width="100.66" height="9" fill="#1a250d"/><rect x="1499.0" y="1144.13" width="96.12" height="9" fill="#1a250d"/><rect x="1499.0" y="1155.47" width="94.60" height="9" fill="#1a250d"/><rect x="1499.0" y="1166.80" width="94.10" height="9" fill="#1a250d"/><rect x="1499.0" y="1178.13" width="90.06" height="9" fill="#1a250d"/><rect x="1499.0" y="1189.47" width="86.02" height="9" fill="#1a250d"/><rect x="1499.0" y="1200.80" width="84.67" height="9" fill="#1a250d"/><line x1="1499.0" y1="1211.0" x2="2509.0" y2="1211.0" stroke="#666"/><line x1="1499.0" y1="1211.0" x2="2509.0" y2="1211.0" stroke="#ddd" stroke-opacity="0.55" stroke-dasharray="3 3"/><line x1="1499.0" y1="1041.0" x2="1499.0" y2="1211.0" stroke="#666"/><line x1="1499.00" y1="1211.0" x2="1499.00" y2="1217.0" stroke="#666"/><line x1="1751.50" y1="1211.0" x2="1751.50" y2="1217.0" stroke="#666"/><line x1="2004.00" y1="1211.0" x2="2004.00" y2="1217.0" stroke="#666"/><line x1="2256.50" y1="1211.0" x2="2256.50" y2="1217.0" stroke="#666"/><line x1="2509.00" y1="1211.0" x2="2509.00" y2="1217.0" stroke="#666"/><line x1="1493.0" y1="1069.33" x2="1499.0" y2="1069.33" stroke="#666"/><line x1="1493.0" y1="1092.00" x2="1499.0" y2="1092.00" stroke="#666"/><line x1="1493.0" y1="1114.67" x2="1499.0" y2="1114.67" stroke="#666"/><line x1="1493.0" y1="1137.33" x2="1499.0" y2="1137.33" stroke="#666"/><line x1="1493.0" y1="1160.00" x2="1499.0" y2="1160.00" stroke="#666"/><line x1="1493.0" y1="1182.67" x2="1499.0" y2="1182.67" stroke="#666"/><line x1="1493.0" y1="1205.33" x2="1499.0" y2="1205.33" stroke="#666"/></svg>
<div class="b" style="left:2521px;top:1165.8px;width:36px;height:36px;background:#262626;border-radius:50%;box-shadow:0 3px 12px rgba(0,0,0,0.16);"></div>
<svg style="left:2528.5px;top:1175.8px" width="16" height="16" viewBox="0 0 16 16"><path d="M8,0.8 C8.6,5 10.8,7.3 15.2,8 C10.8,8.7 8.6,11 8,15.2 C7.4,11 5.2,8.7 0.8,8 C5.2,7.3 7.4,5 8,0.8 Z" fill="#fff"/></svg>
</div></body></html>
